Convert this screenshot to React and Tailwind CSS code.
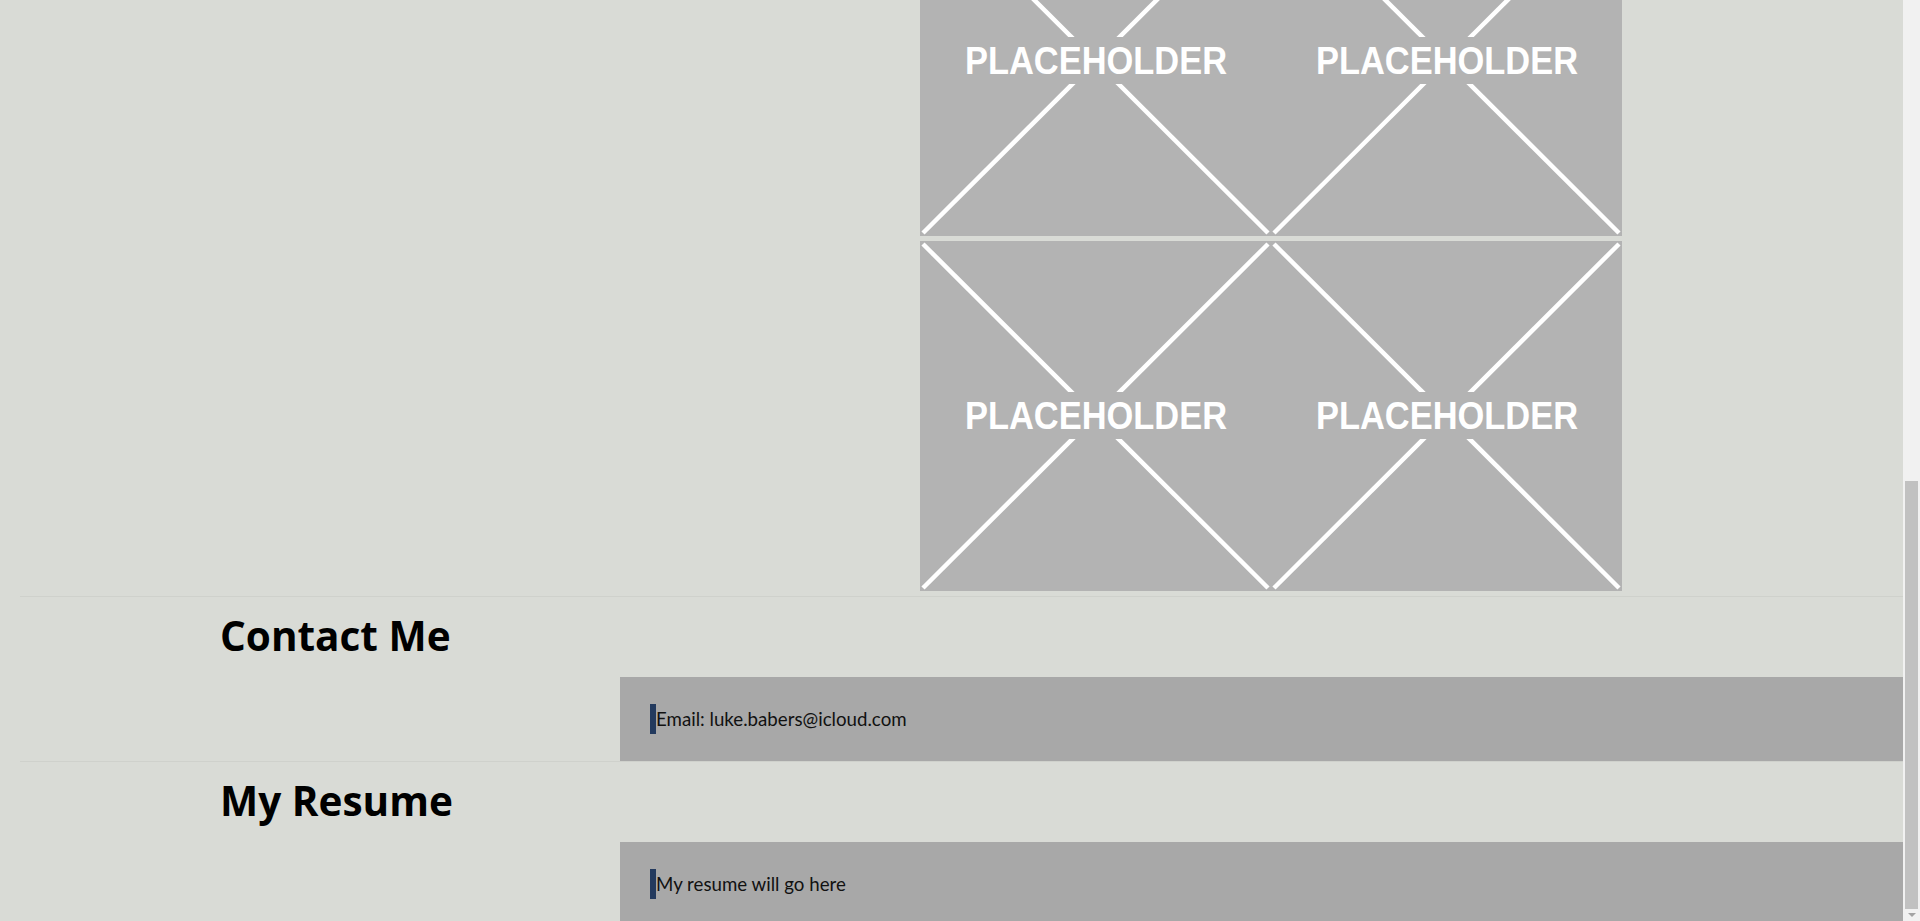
import React from "react";

function Placeholder() {
  return (
    <svg width="351" height="350" viewBox="0 0 351 350" className="block">
      <rect width="351" height="350" fill="#b3b3b3" />
      <line x1="3" y1="3" x2="348" y2="347" stroke="#fff" strokeWidth="4.5" />
      <line x1="348" y1="3" x2="3" y2="347" stroke="#fff" strokeWidth="4.5" />
      {/* gap behind the label */}
      <rect x="0" y="151" width="351" height="47" fill="#b3b3b3" />
      <text
        x="176"
        y="188"
        textAnchor="middle"
        textLength="262"
        lengthAdjust="spacingAndGlyphs"
        fill="#fff"
        fontSize="38"
        fontWeight="700"
        fontFamily="'Liberation Sans', Arial, sans-serif"
      >
        PLACEHOLDER
      </text>
    </svg>
  );
}

function Section({ title, children }) {
  return (
    <section className="border-t border-[#cfd1cc]">
      <div className="h-[80px] pl-[200px] pt-[19px]">
        <h2 className="text-[40.5px] leading-[40px] font-bold text-black font-['Open_Sans',sans-serif]">
          {title}
        </h2>
      </div>
      <div className="ml-[600px] h-[84px] bg-[#a8a8a8] pl-[30px] flex items-center">
        <p className="border-l-[6px] border-[#233a5e] leading-[30px] text-[18.7px] text-[#111] font-['Lato',sans-serif]">
          {children}
        </p>
      </div>
    </section>
  );
}

export default function App() {
  return (
    <div className="flex h-[921px] overflow-hidden bg-[#d9dbd6]">
      <main className="flex-1 overflow-hidden pl-[20px]">
        {/* gallery, scrolled partly out of view */}
        <div className="ml-[900px] -mt-[114px] grid grid-cols-[351px_351px] gap-y-[5px] w-[702px]">
          <Placeholder />
          <Placeholder />
          <Placeholder />
          <Placeholder />
        </div>

        <div className="mt-[5px]">
          <Section title="Contact Me">Email: luke.babers@icloud.com</Section>
          <Section title="My Resume">My resume will go here</Section>
        </div>
      </main>

      {/* scrollbar */}
      <div className="w-[17px] bg-[#f1f1f1] flex flex-col">
        <div className="h-[481px]" />
        <div className="mx-[2px] h-[428px] bg-[#c1c1c1]" />
        <div className="flex-1 flex items-center justify-center">
          <div className="w-0 h-0 border-l-[4px] border-r-[4px] border-t-[4px] border-l-transparent border-r-transparent border-t-[#a3a3a3]" />
        </div>
      </div>
    </div>
  );
}
